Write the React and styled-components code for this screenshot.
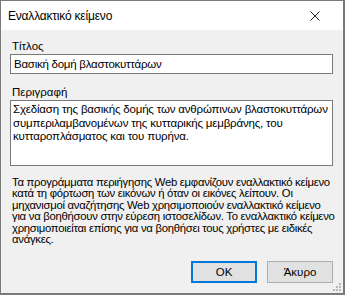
import styled, { createGlobalStyle } from 'styled-components'

const Global = createGlobalStyle`
  html, body {
    margin: 0;
    padding: 0;
    background: #f0f0f0;
  }
  * { box-sizing: border-box; }
`

const Dialog = styled.div`
  width: 345px;
  height: 295px;
  display: flex;
  flex-direction: column;
  border: 1px solid #7a7a7a;
  border-right-width: 2px;
  border-bottom-width: 2px;
  background: #f0f0f0;
  font-family: "Liberation Sans", Arial, sans-serif;
  color: #000;
  position: relative;
`

const TitleBar = styled.div`
  height: 29px;
  background: #fff;
  display: flex;
  align-items: center;
  justify-content: space-between;
  padding: 0 0 0 7px;
  font-size: 12px;
  letter-spacing: -0.2px;
`

const CloseButton = styled.button`
  width: 46px;
  height: 29px;
  border: none;
  background: transparent;
  display: flex;
  align-items: center;
  justify-content: center;
  padding: 0 10px 0 0;
`

const Body = styled.div`
  flex: 1;
  display: flex;
  flex-direction: column;
  padding: 9px 10px 9px 9px;
`

const Label = styled.div`
  font-size: 11.5px;
  padding-left: 2px;
  height: 14px;
  line-height: 14px;
  margin-bottom: 1px;
  margin-top: ${p => p.$top || 0}px;
`

const Input = styled.div`
  height: 20px;
  background: #fff;
  border: 1px solid #7a7a7a;
  font-size: 11.5px;
  letter-spacing: -0.25px;
  padding: 0 3px;
  line-height: 18px;
`

const TextArea = styled.div`
  height: 66px;
  background: #fff;
  border: 1px solid #7a7a7a;
  font-size: 11.5px;
  letter-spacing: -0.18px;
  padding: 2px 2px;
  line-height: 13.5px;
  white-space: nowrap;
  overflow: hidden;
`

const Help = styled.p`
  margin: 11px 0 0;
  padding-left: 2px;
  font-size: 11.3px;
  letter-spacing: -0.27px;
  line-height: 11.4px;
  white-space: nowrap;
`

const Buttons = styled.div`
  margin-top: auto;
  display: flex;
  justify-content: flex-end;
  gap: 10px;
  padding-bottom: 1px;
`

const Button = styled.button`
  width: 66px;
  height: 22px;
  background: #e1e1e1;
  border: ${p => (p.$primary ? '2px solid #0078d7' : '1px solid #adadad')};
  font-family: inherit;
  font-size: 11.5px;
  color: #000;
  padding: 0;
`

const Grip = styled.svg`
  position: absolute;
  right: 1px;
  bottom: 1px;
`

export default function App() {
  return (
    <>
      <Global />
      <Dialog>
        <TitleBar>
          <span>Εναλλακτικό κείμενο</span>
          <CloseButton aria-label="Κλείσιμο">
            <svg width="10" height="10" viewBox="0 0 10 10">
              <path d="M0.5 0.5 L9.5 9.5 M9.5 0.5 L0.5 9.5" stroke="#222" strokeWidth="1" />
            </svg>
          </CloseButton>
        </TitleBar>
        <Body>
          <Label>Τίτλος</Label>
          <Input>Βασική δομή βλαστοκυττάρων</Input>
          <Label $top={11}>Περιγραφή</Label>
          <TextArea>
            Σχεδίαση της βασικής δομής των ανθρώπινων βλαστοκυττάρων<br />
            συμπεριλαμβανομένων της κυτταρικής μεμβράνης, του<br />
            κυτταροπλάσματος και του πυρήνα.
          </TextArea>
          <Help>
            Τα προγράμματα περιήγησης Web εμφανίζουν εναλλακτικό κείμενο<br />
            κατά τη φόρτωση των εικόνων ή όταν οι εικόνες λείπουν. Οι<br />
            μηχανισμοί αναζήτησης Web χρησιμοποιούν εναλλακτικό κείμενο<br />
            για να βοηθήσουν στην εύρεση ιστοσελίδων. Το εναλλακτικό κείμενο<br />
            χρησιμοποιείται επίσης για να βοηθήσει τους χρήστες με ειδικές<br />
            ανάγκες.
          </Help>
          <Buttons>
            <Button $primary>OK</Button>
            <Button>Άκυρο</Button>
          </Buttons>
        </Body>
        <Grip width="10" height="10" viewBox="0 0 10 10">
          <g fill="#b8b8b8">
            <rect x="7" y="1" width="2" height="2" />
            <rect x="4" y="4" width="2" height="2" />
            <rect x="7" y="4" width="2" height="2" />
            <rect x="1" y="7" width="2" height="2" />
            <rect x="4" y="7" width="2" height="2" />
            <rect x="7" y="7" width="2" height="2" />
          </g>
        </Grip>
      </Dialog>
    </>
  )
}
